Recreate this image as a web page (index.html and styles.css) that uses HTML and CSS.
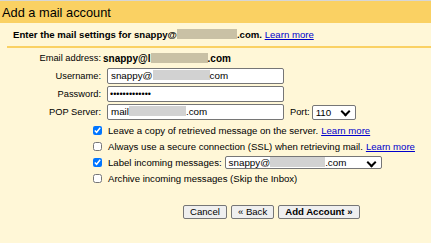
FILE: index.html
```html
<!DOCTYPE html>
<html lang="en">
  <head>
    <meta charset="UTF-8" />
    <title>Add a mail account</title>
    <link rel="stylesheet" href="styles.css">
  </head>
  <body>
    <div class="head">
      <h1 class="title">Add a mail account</h1>
    </div>
    <div class="intro">
      Enter the mail settings for snappy@<span class="blur cream"></span>.com.
      <a href="#" class="learn">Learn more</a>
    </div>

    <div class="form">
      <div class="row">
        <span class="label">Email address:</span>
        <span class="addr">snappy@l<span class="blur cream short"></span>.com</span>
      </div>
      <div class="row">
        <span class="label">Username:</span>
        <div class="field">snappy@<span class="blur"></span>com</div>
      </div>
      <div class="row">
        <span class="label">Password:</span>
        <div class="field dots">&bull;&bull;&bull;&bull;&bull;&bull;&bull;&bull;&bull;&bull;&bull;&bull;&bull;</div>
      </div>
      <div class="row">
        <span class="label">POP Server:</span>
        <div class="field">mail<span class="blur"></span>.com</div>
        <span class="port-label">Port:</span>
        <div class="select port">110 <span class="chev"></span></div>
      </div>

      <div class="checks">
        <label class="check">
          <input type="checkbox" checked />
          Leave a copy of retrieved message on the server. <a href="#" class="learn">Learn more</a>
        </label>
        <label class="check">
          <input type="checkbox" />
          Always use a secure connection (SSL) when retrieving mail. <a href="#" class="learn">Learn more</a>
        </label>
        <label class="check">
          <input type="checkbox" checked />
          Label incoming messages:
          <div class="select label-select">snappy@<span class="blur wide"></span>.com <span class="chev"></span></div>
        </label>
        <label class="check">
          <input type="checkbox" />
          Archive incoming messages (Skip the Inbox)
        </label>
      </div>

      <div class="buttons">
        <button class="btn">Cancel</button>
        <button class="btn">&laquo; Back</button>
        <button class="btn strong">Add Account &raquo;</button>
      </div>
    </div>
  </body>
</html>
```

FILE: styles.css
```css
body {
  margin: 0;
  background: #fff7d7;
  font-family: "Liberation Sans", Arial, sans-serif;
  font-size: 9.3px;
  color: #000;
  border-top: 1px solid #d6d6d6;
  height: 242px;
  overflow: hidden;
}
.head {
  background: #fad163;
  height: 22px;
  display: flex;
  align-items: center;
  padding-left: 2px;
}
.head .title {
  margin: 0;
  font-size: 12.8px;
  font-weight: normal;
}
.intro {
  margin-left: 7px;
  padding: 6px 0 0 6px;
  height: 17px;
  box-sizing: content-box;
  border-bottom: 2px solid #fad163;
  font-weight: bold;
  font-size: 9.6px;
  white-space: nowrap;
}
.learn {
  color: #0000cc;
  text-decoration: underline;
  font-weight: normal;
}
.blur {
  display: inline-block;
  width: 57px;
  height: 10px;
  vertical-align: -1px;
  background: #d2d2d2;
}
.blur.cream {
  background: #c9c1a5;
  width: 60px;
}
.blur.short {
  width: 57px;
}
.blur.wide {
  width: 55px;
}

.form {
  padding-top: 2px;
}
.row {
  display: flex;
  align-items: center;
  height: 16px;
  margin-bottom: 2px;
}
.row .label {
  width: 107px;
  text-align: right;
  padding-right: 6px;
  box-sizing: border-box;
  flex: none;
}
.row .addr {
  font-weight: bold;
  font-size: 10px;
  margin-left: -4px;
}
.field {
  box-sizing: border-box;
  width: 177px;
  height: 16px;
  border: 1px solid #767676;
  border-radius: 2px;
  background: #fff;
  padding-left: 3px;
  font-size: 9.8px;
  line-height: 14px;
  white-space: nowrap;
  overflow: hidden;
}
.field.dots {
  font-size: 9px;
  letter-spacing: 0;
  padding-left: 2px;
}
.port-label {
  margin-left: 6px;
  margin-right: 2px;
}
.select {
  box-sizing: border-box;
  height: 15px;
  border: 1px solid #767676;
  border-radius: 2px;
  background: #fff;
  padding-left: 3px;
  font-size: 9.8px;
  display: flex;
  align-items: center;
  position: relative;
}
.select.port {
  width: 44px;
}
.chev {
  position: absolute;
  right: 6px;
  top: 2px;
  width: 5px;
  height: 5px;
  border-right: 2px solid #000;
  border-bottom: 2px solid #000;
  transform: rotate(45deg);
}

.checks {
  padding-left: 93px;
  font-size: 9.6px;
}
.check {
  display: flex;
  align-items: center;
  height: 16px;
  white-space: nowrap;
}
.check .learn {
  margin-left: 3px;
}
.check input {
  margin: 0 6px 0 0;
  width: 9px;
  height: 9px;
  accent-color: #0075ff;
}
.label-select {
  margin-left: 3px;
  width: 157px;
  height: 13px;
}

.buttons {
  display: flex;
  gap: 4px;
  padding-left: 183px;
  margin-top: 19px;
}
.btn {
  font-family: inherit;
  font-size: 9.6px;
  height: 14px;
  padding: 0 6px;
  border: 1px solid #767676;
  border-radius: 2px;
  background: #efefef;
  color: #000;
  line-height: 12px;
}
.btn.strong {
  font-weight: bold;
}
```
